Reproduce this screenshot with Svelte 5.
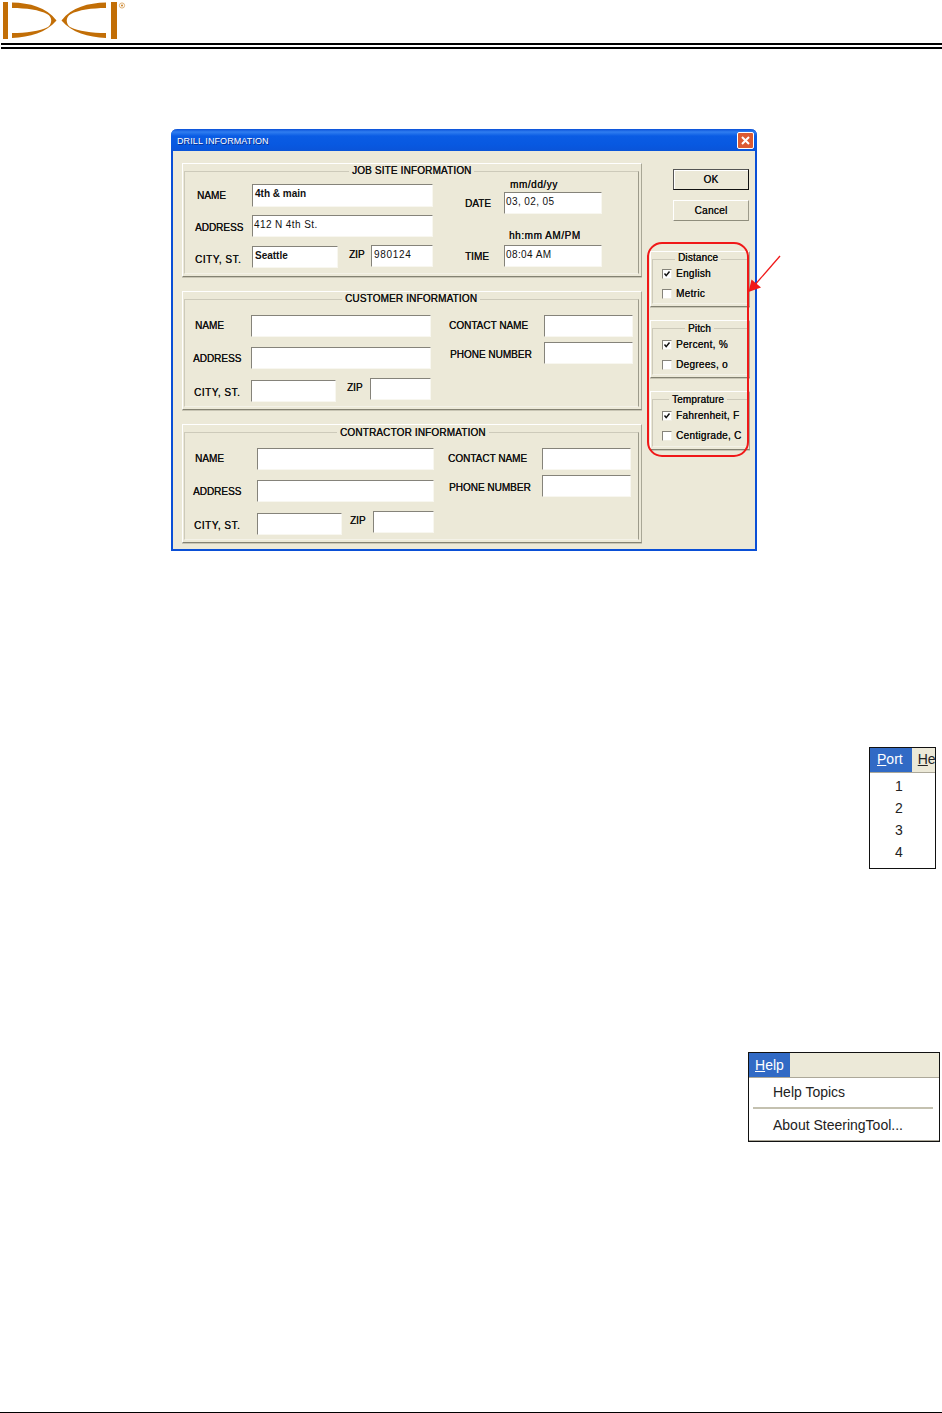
<script>
  // coordinates below are page pixels, same as reading them off the scan
  const jobSite = {
    title: 'JOB SITE INFORMATION', x: 182, y: 163, w: 460, h: 114, titleX: 349,
    fields: [
      { x: 252, y: 184, w: 181, h: 23, value: '4th & main', kind: 'bold' },
      { x: 252, y: 215, w: 181, h: 22, value: '412 N 4th St.', kind: 'mid' },
      { x: 252, y: 246, w: 86, h: 22, value: 'Seattle', kind: 'bold' },
      { x: 371, y: 245, w: 62, h: 22, value: '980124', kind: 'wide' },
      { x: 504, y: 192, w: 98, h: 22, value: '03, 02, 05', kind: 'mid' },
      { x: 504, y: 245, w: 98, h: 22, value: '08:04 AM', kind: 'mid' }
    ],
    labels: [
      { x: 197, y: 195, text: 'NAME' },
      { x: 195, y: 227, text: 'ADDRESS' },
      { x: 195, y: 259, text: 'CITY, ST.', wide: true },
      { x: 349, y: 254, text: 'ZIP' },
      { x: 465, y: 203, text: 'DATE' },
      { x: 465, y: 256, text: 'TIME' },
      { x: 510, y: 184, text: 'mm/dd/yy', wide: true },
      { x: 509, y: 235, text: 'hh:mm AM/PM', wide: true }
    ]
  };

  const customer = {
    title: 'CUSTOMER INFORMATION', x: 182, y: 291, w: 460, h: 119, titleX: 342,
    fields: [
      { x: 251, y: 315, w: 180, h: 22 },
      { x: 251, y: 347, w: 180, h: 22 },
      { x: 251, y: 380, w: 85, h: 22 },
      { x: 370, y: 378, w: 61, h: 22 },
      { x: 544, y: 315, w: 89, h: 22 },
      { x: 544, y: 342, w: 89, h: 22 }
    ],
    labels: [
      { x: 195, y: 325, text: 'NAME' },
      { x: 193, y: 358, text: 'ADDRESS' },
      { x: 194, y: 392, text: 'CITY, ST.', wide: true },
      { x: 347, y: 387, text: 'ZIP' },
      { x: 449, y: 325, text: 'CONTACT NAME' },
      { x: 450, y: 354, text: 'PHONE NUMBER' }
    ]
  };

  const contractor = {
    title: 'CONTRACTOR INFORMATION', x: 182, y: 424, w: 460, h: 119, titleX: 337, titleTop: 2,
    fields: [
      { x: 257, y: 448, w: 177, h: 22 },
      { x: 257, y: 480, w: 177, h: 22 },
      { x: 257, y: 513, w: 85, h: 22 },
      { x: 373, y: 511, w: 61, h: 22 },
      { x: 542, y: 448, w: 89, h: 22 },
      { x: 542, y: 475, w: 89, h: 22 }
    ],
    labels: [
      { x: 195, y: 458, text: 'NAME' },
      { x: 193, y: 491, text: 'ADDRESS' },
      { x: 194, y: 525, text: 'CITY, ST.', wide: true },
      { x: 350, y: 520, text: 'ZIP' },
      { x: 448, y: 458, text: 'CONTACT NAME' },
      { x: 449, y: 487, text: 'PHONE NUMBER' }
    ]
  };

  const units = [
    { title: 'Distance', x: 650, y: 251, w: 100, h: 56, titleX: 675, titleTop: 0, options: [
      { y: 273, text: 'English', checked: true }, { y: 293, text: 'Metric' } ] },
    { title: 'Pitch', x: 650, y: 320, w: 100, h: 58, titleX: 685, titleTop: 2, options: [
      { y: 344, text: 'Percent, %', checked: true }, { y: 364, text: 'Degrees, o' } ] },
    { title: 'Temprature', x: 650, y: 391, w: 100, h: 59, titleX: 669, titleTop: 2, options: [
      { y: 415, text: 'Fahrenheit, F', checked: true }, { y: 435, text: 'Centigrade, C' } ] }
  ];

  const dee = 'M12 2.5 C30 3 46 7 56.5 20.5 C46 33 30 37 12 38 L12 33 C26 33 40 31 48 27 C52 24 53 17 47 14 C40 10 26 8 12 8 Z';
</script>

{#snippet groupBox(g)}
  <div class="group" class:narrow={g.options} style="width:{g.w}px;height:{g.h}px">
    <div class="group-inner"></div>
    <span class="group-title" style="left:{g.titleX - g.x - 1}px;top:{g.titleTop ?? 1}px">{g.title}</span>
    {#each g.fields ?? [] as f}
      <div class="field {f.kind ?? ''}"
        style="left:{f.x - g.x - 1}px;top:{f.y - g.y - 1}px;width:{f.w}px;height:{f.h}px">{f.value ?? ''}</div>
    {/each}
    {#each g.labels ?? [] as l}
      <span class="label" class:wide={l.wide} style="left:{l.x - g.x - 1}px;top:{l.y - g.y - 6}px">{l.text}</span>
    {/each}
    {#each g.options ?? [] as o}
      <span class="box" style="top:{o.y - g.y - 5}px">
        {#if o.checked}
          <svg width="8" height="8" viewBox="0 0 8 8"><path d="M1.5 3.5 L3.2 5.6 L6.5 1.5" fill="none" stroke="#111" stroke-width="1.5"/></svg>
        {/if}
      </span>
      <span class="label option" style="top:{o.y - g.y - 6}px">{o.text}</span>
    {/each}
  </div>
{/snippet}

<div class="page">
  <header>
    <svg class="logo" width="130" height="41" viewBox="0 0 130 41">
      <g fill="#c26e06">
        <rect x="3" y="2" width="5" height="37"/>
        <path d={dee}/>
        <path d={dee} transform="matrix(-1 0 0 1 118 0)"/>
        <rect x="111" y="2" width="6" height="37"/>
      </g>
      <circle cx="122" cy="5.5" r="2.6" fill="none" stroke="#d9a868" stroke-width="0.9"/>
      <circle cx="122" cy="5.5" r="0.9" fill="#c26e06"/>
    </svg>
    <div class="rule"></div>
    <div class="rule second"></div>
  </header>

  <div class="dialog">
    <div class="titlebar">
      <span class="caption">DRILL INFORMATION</span>
      <span class="close">
        <svg width="15" height="15" viewBox="0 0 15 15"><path d="M4 4 L11 11 M11 4 L4 11" stroke="#fff" stroke-width="2"/></svg>
      </span>
    </div>
    <div class="client">
      <div class="left-col">
        {@render groupBox(jobSite)}
        {@render groupBox(customer)}
        {@render groupBox(contractor)}
      </div>
      <div class="right-col">
        <button class="default">OK</button>
        <button>Cancel</button>
        <div class="units">
          {#each units as u}
            {@render groupBox(u)}
          {/each}
        </div>
      </div>
    </div>

    <!-- callout drawn on top of the scan -->
    <svg class="callout" width="145" height="225" viewBox="0 0 145 225">
      <rect x="7" y="4" width="100" height="213" rx="14" fill="none" stroke="#f01818" stroke-width="2"/>
      <line x1="139" y1="17" x2="112" y2="48" stroke="#f01818" stroke-width="1.3"/>
      <polygon points="107.5,53 110.5,40.5 120,48.5" fill="#f01818"/>
    </svg>
  </div>

  <div class="menu port">
    <div class="menubar">
      <span class="active"><u>P</u>ort</span>
      <span class="next"><u>H</u>e</span>
    </div>
    <div class="drop digits">
      <span>1</span>
      <span>2</span>
      <span>3</span>
      <span>4</span>
    </div>
  </div>

  <div class="menu help">
    <div class="menubar">
      <span class="active"><u>H</u>elp</span>
    </div>
    <div class="drop items">
      <span>Help Topics</span>
      <hr />
      <span>About SteeringTool...</span>
    </div>
  </div>

  <div class="foot-rule"></div>
</div>

<style>
  :global(body) {
    margin: 0;
    background: #fff;
  }

  .page {
    display: flex;
    flex-direction: column;
    height: 1413px;
    width: 942px;
    overflow: hidden;
    font-family: "Liberation Sans", Arial, sans-serif;
  }

  header {
    height: 49px;
  }

  .logo {
    display: block;
    height: 41px;
  }

  .rule {
    height: 2px;
    margin: 2px 0 0 1px;
    background: #000;
  }

  .rule.second {
    margin-top: 2px;
  }

  .dialog {
    position: relative;
    box-sizing: border-box;
    width: 586px;
    height: 422px;
    margin: 80px 0 0 171px;
    border: 2px solid #0a4fd6;
    border-top: 0;
    border-radius: 6px 6px 0 0;
    background: #ece9d8;
  }

  .titlebar {
    display: flex;
    align-items: center;
    justify-content: space-between;
    box-sizing: border-box;
    height: 22px;
    margin: 0 -2px;
    padding: 0 3px 0 6px;
    border-radius: 6px 6px 0 0;
    background: linear-gradient(#0a50d8 0, #2f7df0 3px, #0a5ce4 7px, #0858e0 16px, #0a54d8 22px);
    color: #fff;
    font-size: 9px;
    letter-spacing: 0.1px;
    text-shadow: 1px 1px 0 #0a2f90;
  }

  .caption {
    padding-top: 2px;
  }

  .close {
    display: flex;
    width: 15px;
    height: 15px;
    border: 1px solid #fff;
    border-radius: 2px;
    background: #dc5a32;
  }

  .client {
    display: flex;
    gap: 8px;
    padding: 12px 0 0 9px;
  }

  .left-col {
    display: flex;
    flex-direction: column;
    gap: 14px;
  }

  .right-col {
    display: flex;
    flex-direction: column;
    align-items: flex-start;
  }

  .units {
    display: flex;
    flex-direction: column;
    gap: 13px;
    margin-top: 20px;
  }

  button {
    box-sizing: border-box;
    width: 76px;
    height: 21px;
    margin: 0 0 10px 23px;
    padding: 0;
    border: 1px solid;
    border-color: #fff #9c9a8a #8f8d7c #fff;
    border-radius: 0;
    background: #ece9d8;
    color: #111;
    font: 10px "Liberation Sans", Arial, sans-serif;
    letter-spacing: 0.3px;
    text-shadow: 0.3px 0 0 #111;
  }

  button.default {
    margin-top: 6px;
    border-color: #555 #111 #111 #555;
    box-shadow: inset 1px 1px 0 #fff;
  }

  .group {
    position: relative;
    box-sizing: border-box;
    border: 1px solid;
    border-color: #fff #a9a796 #848272 #fff;
    box-shadow: 0 1px 0 #c8c5b4;
  }

  .group-inner {
    position: absolute;
    left: 1px;
    top: 7px;
    right: 2px;
    bottom: 2px;
    border: 1px solid;
    border-color: #cdcaba #9c9a8a #f4f2e8 #cdcaba;
  }

  .narrow .group-inner {
    right: 1px;
  }

  .group-title {
    position: absolute;
    padding: 0 3px;
    background: #ece9d8;
    color: #111;
    font-size: 10px;
    line-height: 12px;
    letter-spacing: 0.15px;
    white-space: nowrap;
    text-shadow: 0.2px 0 0 #111;
  }

  .label {
    position: absolute;
    color: #111;
    font-size: 10px;
    line-height: 12px;
    white-space: nowrap;
    text-shadow: 0.2px 0 0 #111;
  }

  .label.wide {
    letter-spacing: 0.55px;
  }

  .option {
    left: 25px;
    letter-spacing: 0.3px;
  }

  .field {
    position: absolute;
    box-sizing: border-box;
    padding: 3px 0 0 2px;
    border: 1px solid;
    border-color: #85837a #f8f7f0 #f8f7f0 #85837a;
    background: #fff;
    color: #111;
    font-size: 10px;
    line-height: 12px;
    white-space: nowrap;
    overflow: hidden;
  }

  .field.bold {
    font-weight: 700;
  }

  .field.wide {
    letter-spacing: 0.7px;
  }

  .field.mid {
    padding-left: 1px;
    letter-spacing: 0.4px;
  }

  .box {
    position: absolute;
    left: 11px;
    display: flex;
    align-items: center;
    justify-content: center;
    box-sizing: border-box;
    width: 10px;
    height: 10px;
    border: 1px solid;
    border-color: #85837a #f0eee2 #f0eee2 #85837a;
    background: #fff;
  }

  .callout {
    position: absolute;
    left: 468px;
    top: 110px;
    pointer-events: none;
  }

  .menu {
    box-sizing: border-box;
    border: 1px solid #111;
    color: #222;
    font-size: 14px;
  }

  .menubar {
    display: flex;
    height: 24px;
    line-height: 23px;
    background: #ece9d8;
    box-shadow: 0 1px 0 #aca899;
  }

  .menubar span {
    box-sizing: border-box;
    height: 24px;
  }

  .active {
    background: #316ac5;
    color: #fff;
  }

  .next {
    padding-left: 6px;
    overflow: hidden;
  }

  .port {
    width: 67px;
    height: 122px;
    margin: 196px 0 0 869px;
  }

  .port .active {
    width: 43px;
    padding-left: 7px;
  }

  .digits {
    display: flex;
    flex-direction: column;
    align-items: center;
    gap: 4px;
    padding: 5px 7px 0 0;
  }

  .digits span {
    line-height: 18px;
  }

  .help {
    width: 192px;
    height: 90px;
    margin: 183px 0 0 748px;
  }

  .help .menubar {
    line-height: 25px;
  }

  .help .active {
    width: 41px;
    padding-left: 6px;
  }

  .items {
    display: flex;
    flex-direction: column;
    padding: 6px 6px 0 4px;
    box-shadow: inset 0 -1px 0 #aca899;
    height: 64px;
    box-sizing: border-box;
  }

  .items span {
    padding-left: 20px;
    line-height: 19px;
  }

  .items hr {
    width: 100%;
    margin: 5px 0 7px;
    border: 0;
    height: 2px;
    background: #c4c1b0;
  }

  .foot-rule {
    height: 1px;
    margin-top: auto;
    background: #000;
  }
</style>
